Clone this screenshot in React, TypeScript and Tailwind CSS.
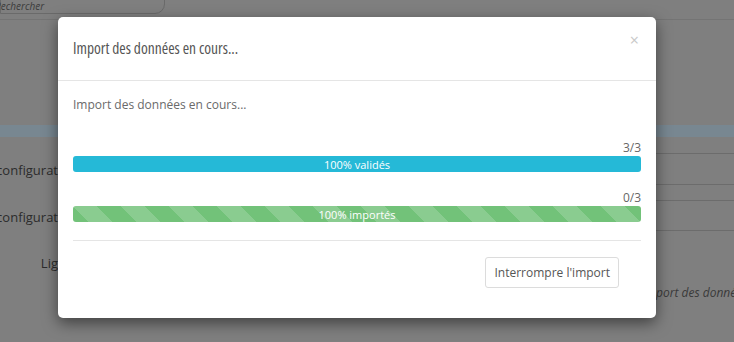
import React from "react";

const stripes =
  "linear-gradient(45deg, rgba(255,255,255,0.17) 25%, transparent 25%, transparent 50%, rgba(255,255,255,0.17) 50%, rgba(255,255,255,0.17) 75%, transparent 75%, transparent)";

function Bar({ label, count, color, striped }: { label: string; count: string; color: string; striped?: boolean }) {
  return (
    <div>
      <div className="text-right text-[12px] leading-[17px] text-[#666]">{count}</div>
      <div
        className={`h-4 rounded-[3px] flex items-center justify-center text-white text-[11px] leading-none ${color} ${
          striped ? "bg-[length:48px_48px]" : ""
        }`}
        style={striped ? { backgroundImage: stripes } : undefined}
      >
        {label}
      </div>
    </div>
  );
}

export default function App() {
  return (
    <div className="relative w-[734px] h-[342px] overflow-hidden bg-[#7f7f7f] font-['Open_Sans',sans-serif]">
      {/* ── page behind the backdrop ─────────────────── */}
      <div className="flex flex-col h-full">
        <div className="h-5 border-b border-[#747474] flex">
          <div className="w-[165px] h-[15px] -mt-px border border-[#6a6a6a] rounded-br-[10px] text-[10px] italic text-[#3c3c3c] leading-[13px] -indent-[6px]">
            Rechercher
          </div>
        </div>
        <div className="h-[105px]" />
        <div className="h-3 bg-[#788791]" />
        <div className="flex-1 flex">
          <div className="w-[58px] flex flex-col items-end text-[13px] text-[#2c2c2c] leading-[18px] overflow-hidden">
            <div className="mt-[24px] whitespace-nowrap">Exemple de configurat</div>
            <div className="mt-[29px] whitespace-nowrap">Exemple de configurat</div>
            <div className="mt-[28px] whitespace-nowrap">Lig</div>
          </div>
          <div className="flex-1" />
          <div className="w-[78px] flex flex-col">
            <div className="mt-[16px] h-[32px] border-y border-[#6c6c6c]" />
            <div className="mt-[15px] h-[31px] border-y border-[#6c6c6c]" />
            <div className="mt-[53px] whitespace-nowrap italic text-[12px] text-[#3a3a3a] leading-[17px]">port des données</div>
          </div>
        </div>
      </div>

      {/* ── modal ────────────────────────────────────── */}
      <div className="absolute left-[58px] top-[17px] w-[598px] h-[301px] bg-white rounded-[5px] shadow-[0_5px_15px_rgba(0,0,0,0.5)]">
        <div className="h-[64px] border-b border-[#e5e5e5] flex items-start justify-between px-[15px]">
          <h4 className="mt-[21px] text-[15.5px] leading-5 text-[#555] font-['Open_Sans',sans-serif] font-stretch-condensed">
            Import des données en cours...
          </h4>
          <button className="mt-[13px] mr-[2px] text-[16px] leading-5 text-[#c8c8c8]">×</button>
        </div>
        <div className="px-[15px] pt-[15px]">
          <p className="text-[12px] leading-[17px] text-[#6a6a6a]">Import des données en cours...</p>
          <div className="mt-[26px]">
            <Bar label="100% validés" count="3/3" color="bg-[#25b9d7]" />
          </div>
          <div className="mt-[17px]">
            <Bar label="100% importés" count="0/3" color="bg-[#72c279]" striped />
          </div>
          <div className="mt-[18px] border-t border-[#e5e5e5]" />
          <div className="flex justify-end pt-[16px] pr-[22px]">
            <button className="h-[31px] px-2 border border-[#dcdcdc] rounded-[3px] text-[12px] text-[#555]">
              Interrompre l'import
            </button>
          </div>
        </div>
      </div>
    </div>
  );
}
